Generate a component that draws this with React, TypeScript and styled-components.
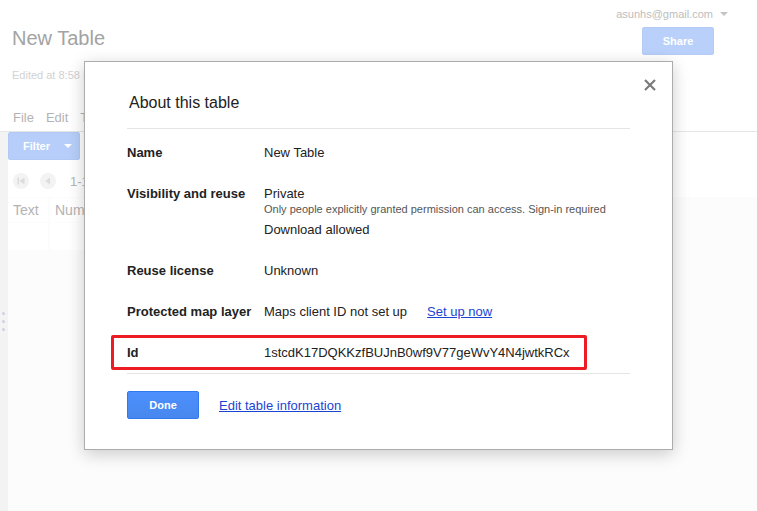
import styled, { createGlobalStyle } from "styled-components";

const GlobalStyle = createGlobalStyle`
    html, body {
        margin: 0;
        padding: 0;
        background: #ffffff;
    }
    body {
        font-family: "Liberation Sans", Arial, sans-serif;
        font-size: 13px;
        color: #222;
    }
    * {
        box-sizing: border-box;
    }
`;

const Page = styled.div`
    position: relative;
    min-height: 100vh;
    display: flex;
    flex-direction: column;
    overflow: hidden;
`;

const TopBar = styled.header`
    height: 132px;
    display: flex;
    justify-content: space-between;
    border-bottom: 1px solid #e6e6e6;
`;

const TitleBlock = styled.div`
    padding: 26px 0 0 12px;
    display: flex;
    flex-direction: column;
`;

const DocTitle = styled.div`
    font-size: 20px;
    line-height: 24px;
    color: #a3a3a3;
`;

const Edited = styled.div`
    margin-top: 18px;
    font-size: 11px;
    line-height: 14px;
    color: #d2d2d2;
    white-space: nowrap;
`;

const Menu = styled.nav`
    margin-top: 27px;
    display: flex;
    gap: 12px;
    font-size: 13px;
    line-height: 17px;
    color: #b3b3b3;
    padding-left: 1px;
`;

const AccountBlock = styled.div`
    padding: 7px 29px 0 0;
    display: flex;
    flex-direction: column;
    align-items: flex-end;
`;

const Account = styled.div`
    display: flex;
    align-items: center;
    gap: 7px;
    font-size: 11px;
    line-height: 14px;
    color: #bdbdbd;
`;

const Caret = styled.span<{ $color: string }>`
    width: 0;
    height: 0;
    border-left: 4px solid transparent;
    border-right: 4px solid transparent;
    border-top: 4px solid ${(p) => p.$color};
`;

const ShareButton = styled.button`
    margin: 6px 14px 0 0;
    width: 72px;
    height: 28px;
    border: 1px solid #b3cbf6;
    border-radius: 2px;
    background: #b8d0fa;
    color: #ffffff;
    font-family: inherit;
    font-size: 11px;
    font-weight: bold;
`;

const Body = styled.div`
    flex: 1;
    display: flex;
`;

const Gutter = styled.div`
    width: 8px;
    background: #f3f3f3;
    display: flex;
    flex-direction: column;
    align-items: center;
    padding-top: 180px;
    gap: 5px;
`;

const Dot = styled.span`
    width: 3px;
    height: 3px;
    border-radius: 50%;
    background: #cdd3e6;
    margin-left: -2px;
`;

const Main = styled.main`
    flex: 1;
    background: #fcfcfc;
    display: flex;
    flex-direction: column;
`;

const Controls = styled.div`
    background: #ffffff;
    height: 65px;
    display: flex;
    flex-direction: column;
`;

const FilterButton = styled.button`
    width: 72px;
    height: 28px;
    border: 1px solid #b1c9f5;
    border-radius: 2px;
    background: #b6cef9;
    color: #ffffff;
    font-family: inherit;
    font-size: 11px;
    font-weight: bold;
    display: flex;
    align-items: center;
    justify-content: flex-end;
    gap: 14px;
    padding: 0 7px 0 0;
`;

const Pager = styled.div`
    margin-top: 13px;
    display: flex;
    align-items: center;
    gap: 11px;
    padding-left: 5px;
`;

const PagerDot = styled.span`
    width: 16px;
    height: 16px;
    border-radius: 50%;
    background: #f3f3f3;
    display: flex;
    align-items: center;
    justify-content: center;
`;

const PagerText = styled.span`
    margin-left: 3px;
    font-size: 13px;
    color: #b4b4b4;
`;

const GridRow = styled.div<{ $height: number }>`
    display: flex;
    gap: 2px;
    height: ${(p) => p.$height}px;
    margin-top: 1px;
`;

const GridCell = styled.div<{ $width: number }>`
    width: ${(p) => p.$width}px;
    background: #ffffff;
    display: flex;
    align-items: center;
    padding-left: 5px;
    font-size: 14px;
    color: #b3b3b3;
`;

const Modal = styled.section`
    position: absolute;
    left: 84px;
    top: 61px;
    width: 589px;
    background: #ffffff;
    border: 1px solid #acacac;
    box-shadow: 0 4px 16px rgba(0, 0, 0, 0.2);
    padding: 31px 42px 30px 42px;
`;

const CloseButton = styled.button`
    position: absolute;
    top: 17px;
    right: 16px;
    width: 12px;
    height: 12px;
    padding: 0;
    border: 0;
    background: none;
    display: flex;
`;

const ModalTitle = styled.h2`
    margin: 0;
    padding: 0 0 15px 2px;
    border-bottom: 1px solid #e5e5e5;
    font-size: 16px;
    line-height: 20px;
    font-weight: normal;
    color: #222;
`;

const Rows = styled.div`
    padding-top: 3px;
`;

const Row = styled.div`
    position: relative;
    display: grid;
    grid-template-columns: 137px 1fr;
    padding: 12px 0;
    line-height: 17px;
`;

const Label = styled.div`
    font-weight: bold;
    color: #222;
`;

const Value = styled.div`
    color: #222;
    display: flex;
    flex-direction: column;
`;

const Inline = styled.div`
    display: flex;
    gap: 20px;
`;

const Note = styled.div`
    font-size: 11px;
    line-height: 14px;
    color: #555;
`;

const Spaced = styled.div`
    margin-top: 5px;
`;

const TextLink = styled.a`
    color: #1a45d2;
    text-decoration: underline;
    cursor: pointer;
`;

const Highlight = styled.div`
    position: absolute;
    left: -16px;
    top: 3px;
    width: 476px;
    height: 35px;
    border: 3px solid #ed1c24;
    border-radius: 2px;
    pointer-events: none;
`;

const Footer = styled.div`
    border-top: 1px solid #e5e5e5;
    padding-top: 17px;
    display: flex;
    align-items: center;
    gap: 20px;
`;

const DoneButton = styled.button`
    width: 72px;
    height: 28px;
    border: 1px solid #3079ed;
    border-radius: 2px;
    background: linear-gradient(#4d90fe, #4787ed);
    color: #ffffff;
    font-family: inherit;
    font-size: 11px;
    font-weight: bold;
`;

interface IDetail {
    label: string;
    content: React.ReactNode;
}

const details: IDetail[] = [
    { label: "Name", content: "New Table" },
    {
        label: "Visibility and reuse",
        content: (
            <>
                <div>Private</div>
                <Note>Only people explicitly granted permission can access. Sign-in required</Note>
                <Spaced>Download allowed</Spaced>
            </>
        ),
    },
    { label: "Reuse license", content: "Unknown" },
    {
        label: "Protected map layer",
        content: (
            <Inline>
                <span>Maps client ID not set up</span>
                <TextLink>Set up now</TextLink>
            </Inline>
        ),
    },
];

const App = () => {
    return (
        <>
            <GlobalStyle />
            <Page>
                <TopBar>
                    <TitleBlock>
                        <DocTitle>New Table</DocTitle>
                        <Edited>Edited at 8:58 PM</Edited>
                        <Menu>
                            <span>File</span>
                            <span>Edit</span>
                            <span>Tools</span>
                            <span>Help</span>
                        </Menu>
                    </TitleBlock>
                    <AccountBlock>
                        <Account>
                            asunhs@gmail.com
                            <Caret $color="#c4c4c4" />
                        </Account>
                        <ShareButton>Share</ShareButton>
                    </AccountBlock>
                </TopBar>
                <Body>
                    <Gutter>
                        <Dot />
                        <Dot />
                        <Dot />
                    </Gutter>
                    <Main>
                        <Controls>
                            <FilterButton>
                                Filter
                                <Caret $color="#ffffff" />
                            </FilterButton>
                            <Pager>
                                <PagerDot>
                                    <svg width="8" height="8" viewBox="0 0 8 8">
                                        <rect x="0.5" y="0.5" width="1.5" height="7" fill="#dcdcdc" />
                                        <path d="M7.5 0.5 L2.5 4 L7.5 7.5 Z" fill="#dcdcdc" />
                                    </svg>
                                </PagerDot>
                                <PagerDot>
                                    <svg width="8" height="8" viewBox="0 0 8 8">
                                        <path d="M6 0.5 L1.5 4 L6 7.5 Z" fill="#dcdcdc" />
                                    </svg>
                                </PagerDot>
                                <PagerText>1-1 of 1</PagerText>
                            </Pager>
                        </Controls>
                        <GridRow $height={24}>
                            <GridCell $width={40}>Text</GridCell>
                            <GridCell $width={90}>Number</GridCell>
                        </GridRow>
                        <GridRow $height={27}>
                            <GridCell $width={40} />
                            <GridCell $width={90} />
                        </GridRow>
                    </Main>
                </Body>

                <Modal>
                    <CloseButton aria-label="Close">
                        <svg width="12" height="12" viewBox="0 0 12 12">
                            <path d="M1 1 L11 11 M11 1 L1 11" stroke="#7a7a7a" strokeWidth="2.2" />
                        </svg>
                    </CloseButton>
                    <ModalTitle>About this table</ModalTitle>
                    <Rows>
                        {details.map((d) => (
                            <Row key={d.label}>
                                <Label>{d.label}</Label>
                                <Value>{d.content}</Value>
                            </Row>
                        ))}
                        <Row>
                            <Highlight />
                            <Label>Id</Label>
                            <Value>1stcdK17DQKKzfBUJnB0wf9V77geWvY4N4jwtkRCx</Value>
                        </Row>
                    </Rows>
                    <Footer>
                        <DoneButton>Done</DoneButton>
                        <TextLink>Edit table information</TextLink>
                    </Footer>
                </Modal>
            </Page>
        </>
    );
};

export default App;
